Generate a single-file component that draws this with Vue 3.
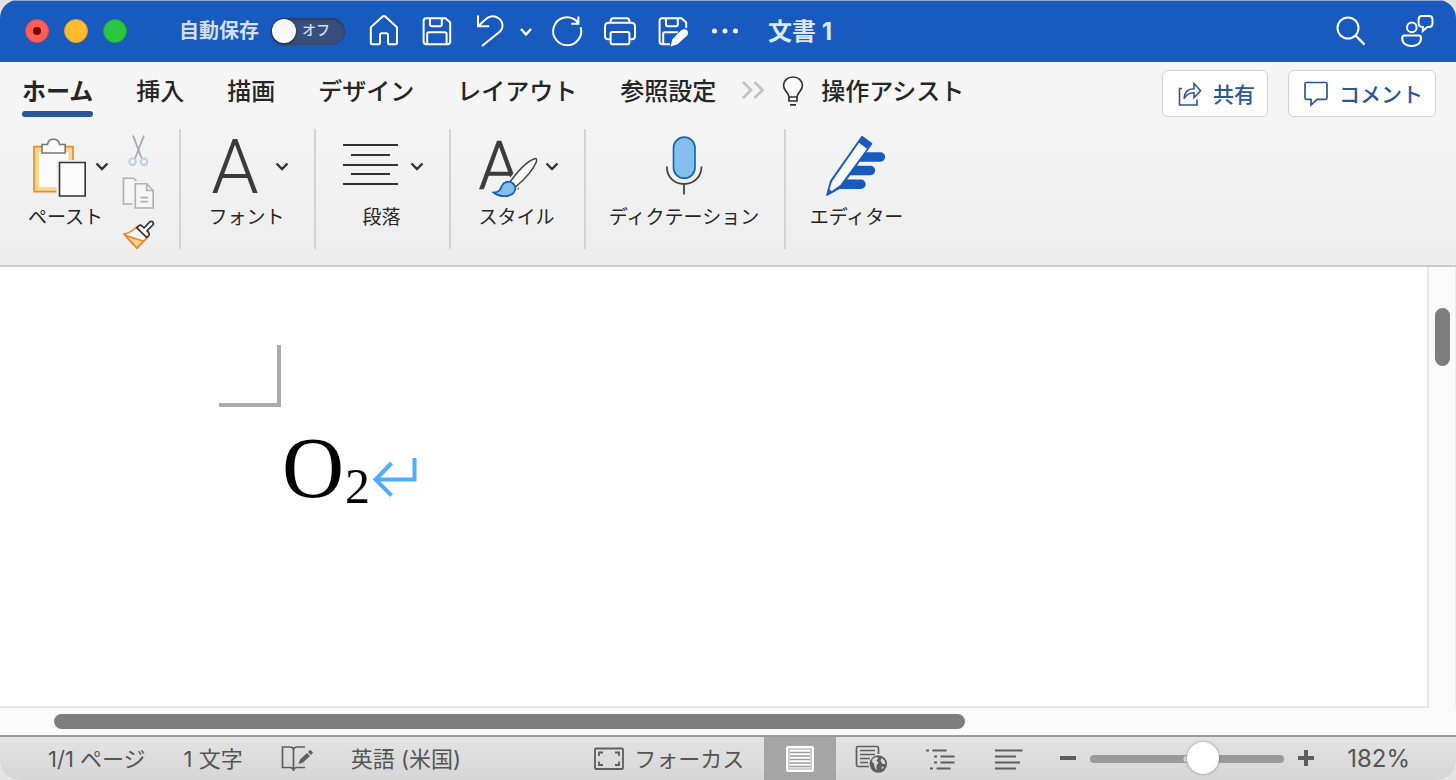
<script setup>
import { ref } from 'vue'

const autosave = ref(false)
const zoom = ref(60)
const activeTab = ref('ホーム')
const activeView = ref('print')

const tabs = ['ホーム', '挿入', '描画', 'デザイン', 'レイアウト', '参照設定']
const views = [
  { id: 'print', label: '印刷レイアウト' },
  { id: 'web', label: 'Web レイアウト' },
  { id: 'outline', label: 'アウトライン' },
  { id: 'draft', label: '下書き' },
]
</script>

<template>
  <div class="window">
    <header class="titlebar">
      <div class="lights">
        <button class="light red" aria-label="閉じる"></button>
        <button class="light yellow" aria-label="しまう"></button>
        <button class="light green" aria-label="拡大"></button>
      </div>
      <label class="autosave">
        <span class="autosave-text">自動保存</span>
        <span class="switch">
          <input v-model="autosave" type="checkbox" />
          <span class="knob"></span>
          <span class="switch-text">オフ</span>
        </span>
      </label>
      <div class="quick">
        <button aria-label="ホーム">
          <svg width="32" height="32" viewBox="0 0 32 32"><path d="M2.8 13.2 Q2.8 12.2 3.6 11.5 L14.6 1.6 Q16 .5 17.2 1.6 L28.2 11.5 Q29 12.2 29 13.2 V27.7 Q29 29.2 27.5 29.2 H21.5 Q20 29.2 20 27.7 V20 Q20 18.2 18.2 18.2 H13.8 Q12 18.2 12 20 V27.7 Q12 29.2 10.5 29.2 H4.3 Q2.8 29.2 2.8 27.7 Z" /></svg>
        </button>
        <button aria-label="保存">
          <svg width="32" height="32" viewBox="0 0 32 32"><path d="M5 3.3 H24.5 L29.2 7.5 V26.5 Q29.2 29.2 26.5 29.2 H5.2 Q2.6 29.2 2.6 26.5 V5.8 Q2.6 3.3 5 3.3 Z M9 3.5 V9.5 Q9 11.3 10.8 11.3 H19 Q20.8 11.3 20.8 9.5 V3.5 M6.2 29 V19 Q6.2 17.3 8 17.3 H23.8 Q25.6 17.3 25.6 19 V29" /></svg>
        </button>
        <button aria-label="元に戻す">
          <svg width="32" height="32" viewBox="0 0 32 32"><path d="M4 .5 V11.2 H15.2 M4.4 10.8 L12 4 C15.5 .6 20.5 .4 24.2 3 C29.6 6.6 29.8 13.4 25.4 17 L8 31" /></svg>
        </button>
        <button class="narrow" aria-label="元に戻す操作の一覧">
          <svg width="16" height="32" viewBox="0 0 16 32"><path d="M3 14 L8 19.5 L13 14" stroke-width="2.4" /></svg>
        </button>
        <button class="redo" aria-label="繰り返し">
          <svg width="32" height="32" viewBox="0 0 32 32"><path d="M29.6 12.2 A14 14 0 1 1 24 4.6 Q26.3 6.3 27.2 8.6 M27.4 1.6 V8.8 H20.2" /></svg>
        </button>
        <button aria-label="印刷">
          <svg width="32" height="32" viewBox="0 0 32 32"><path d="M6.6 24.2 H4 Q1 24.2 1 21.2 V11.5 Q1 7.8 4.7 7.8 H27.3 Q31 7.8 31 11.5 V21.2 Q31 24.2 28 24.2 H25.4 M6.6 7.8 V6 Q6.6 3.2 9.4 3.2 H22.6 Q25.4 3.2 25.4 6 V7.8 M8.6 17 H23.4 Q25.4 17 25.4 19 V27.2 Q25.4 29.2 23.4 29.2 H8.6 Q6.6 29.2 6.6 27.2 V19 Q6.6 17 8.6 17 Z" /></svg>
        </button>
        <button aria-label="名前を付けて保存">
          <svg width="32" height="32" viewBox="0 0 32 32"><path d="M13 29.2 H5.2 Q2.6 29.2 2.6 26.5 V5.8 Q2.6 3.3 5 3.3 H24.5 L29.2 7.5 V13 M9 3.5 V9.5 Q9 11.3 10.8 11.3 H19 Q20.8 11.3 20.8 9.5 V3.5 M6.2 29 V19 Q6.2 17.3 8 17.3 H21" /><path d="M23.4 15.9 Q26 13.4 29.2 14.6 Q32.3 17 30.2 20.6 L20.5 29.3 L13.6 31.6 L15.3 24.6 Z" fill="#fff" stroke="none" /></svg>
        </button>
        <button aria-label="その他">
          <svg width="32" height="32" viewBox="0 0 32 32"><g fill="#fff" stroke="none"><circle cx="4.5" cy="16" r="2.5" /><circle cx="15" cy="16" r="2.5" /><circle cx="25.5" cy="16" r="2.5" /></g></svg>
        </button>
      </div>
      <h1>文書 1</h1>
      <div class="title-right">
        <button aria-label="検索">
          <svg width="32" height="32" viewBox="0 0 32 32"><circle cx="13" cy="13" r="10.5" /><path d="M20.6 20.6 L29.6 29.6" stroke-width="2.2" /></svg>
        </button>
        <button aria-label="プレゼンス">
          <svg width="32" height="32" viewBox="0 0 32 32"><circle cx="10.8" cy="12.4" r="4.8" /><path d="M3.6 20.6 H17.6 Q20 20.6 20 23 C20 28.4 16 31 10.6 31 C5.2 31 1.2 28.4 1.2 23 Q1.2 20.6 3.6 20.6 Z M17.6 8 V4.4 Q17.6 1 21 1 H28 Q31.5 1 31.5 4.4 V8.6 Q31.5 12 28 12 H26.3 L21.8 16 V12 Q17.6 12 17.6 8 Z" /></svg>
        </button>
      </div>
    </header>

    <nav class="tabs">
      <div class="tab-list">
        <button v-for="tab in tabs" :key="tab" :class="{ active: tab === activeTab }" @click="activeTab = tab">{{ tab }}</button>
      </div>
      <button class="more" aria-label="その他のタブ">
        <svg width="24" height="20" viewBox="0 0 24 20" fill="none" stroke="#c3c3c3" stroke-width="2.8"><path d="M2 2 L10 10 L2 18 M13.5 2 L21.5 10 L13.5 18" /></svg>
      </button>
      <button class="assist">
        <svg width="24" height="30" viewBox="0 0 24 30" fill="none" stroke="#333" stroke-width="1.7"><path d="M8 21 C8 16.5 2.6 15 2.6 9.8 C2.6 4.6 6.8 1 12 1 C17.2 1 21.4 4.6 21.4 9.8 C21.4 15 16 16.5 16 21 V25 H8 Z" fill="#fff" /><path d="M8 21 H16 M9 28.8 H15" /></svg>
        <span>操作アシスト</span>
      </button>
      <div class="actions">
        <button>
          <svg width="24" height="26" viewBox="0 0 24 26" fill="none" stroke="#2b579a" stroke-width="1.6"><path d="M4 7.5 H1.5 V24 H19 V18.5 M6 17.5 C6.5 11.5 10 7.8 16 7.8 V2.5 L22.6 9.8 L16 16.5 V11.8 C11.5 11.8 8.5 13.5 6 17.5 Z" /></svg>
          <span>共有</span>
        </button>
        <button class="comment">
          <svg width="24" height="26" viewBox="0 0 24 26" fill="none" stroke="#2b579a" stroke-width="1.7"><path d="M2.5 1.5 H21.5 Q23 1.5 23 3 V16.8 Q23 18.3 21.5 18.3 H13 L7 24 V18.3 H2.5 Q1 18.3 1 16.8 V3 Q1 1.5 2.5 1.5 Z" /></svg>
          <span>コメント</span>
        </button>
      </div>
    </nav>

    <section class="ribbon">
      <div class="group paste-group">
        <button class="tool">
          <span class="tool-row">
            <svg width="60" height="64" viewBox="0 0 60 64">
              <path d="M4 11.7 H43 V56.7 H4 Z" fill="#fbd78c" stroke="#ed8733" stroke-width="1.7" />
              <path d="M9 17 H38.5 V52 H9 Z" fill="#fafafa" />
              <path d="M26.5 25 H60 V64 H26.5 Z" fill="#f1f1f1" />
              <path d="M12 9.5 H17.5 C18 6 20.5 4.3 23.5 4.3 C26.5 4.3 29 6 29.5 9.5 H35.2 V18 H12 Z" fill="#fafafa" stroke="#777" stroke-width="1.6" />
              <path d="M29.5 27.5 H55.2 V61 H29.5 Z" fill="#fafafa" stroke="#333" stroke-width="1.6" />
            </svg>
            <svg class="chevron" width="14" height="14" viewBox="0 0 14 14"><path d="M1.5 3.5 L7 9 L12.5 3.5" /></svg>
          </span>
          <span class="tool-label">ペースト</span>
        </button>
        <div class="clip-tools">
          <button aria-label="切り取り">
            <svg width="32" height="32" viewBox="0 0 32 32" fill="none" stroke-width="1.8"><path d="M11 .5 L19.8 23.5 M22 .5 L13 23.5" stroke="#aaa" /><circle cx="10.6" cy="26.7" r="3.3" stroke="#b0d0ec" /><circle cx="22" cy="26.7" r="3.3" stroke="#b0d0ec" /></svg>
          </button>
          <button aria-label="コピー">
            <svg width="32" height="32" viewBox="0 0 32 32" fill="#f6f6f6" stroke="#b0b0b0" stroke-width="1.6"><path d="M10.5 27 H1.5 V1.2 H11.5 L14.5 4" /><path d="M13.3 6.7 H24.7 L31.2 13.5 V31 H13.3 Z M24.7 6.7 V13.5 H31.2 M18.5 20.6 H26 M18.5 24.6 H26" /></svg>
          </button>
          <button aria-label="書式のコピー">
            <svg width="32" height="32" viewBox="0 0 32 32" stroke-width="1.7" stroke-linejoin="round"><path d="M1.8 15.2 Q9 13.5 14.5 8 L25 19 Q21.5 22 15 29.2 Q8.5 22.5 1.8 15.2 Z" fill="#fafafa" stroke="#ed8733" /><path d="M2.5 15.5 Q10 19 21.5 22 L15 29 Z" fill="#fbd78c" stroke="#ed8733" /><path d="M14.8 8.8 L17 6.6 Q18.5 5.5 20 7 L22 9 L28 2.7 Q29.5 1.7 30.8 3 Q32 4.5 30.8 6 L25 11.9 L26.8 13.7 Q28 15.2 26.8 16.6 L24.9 18.5 Z" fill="#fafafa" stroke="#333" /></svg>
          </button>
        </div>
      </div>

      <div class="group">
        <button class="tool">
          <span class="tool-row">
            <svg width="60" height="64" viewBox="0 0 60 64" aria-hidden="true"><text class="letter" x="30" y="58" font-size="76" text-anchor="middle">A</text></svg>
            <svg class="chevron" width="14" height="14" viewBox="0 0 14 14"><path d="M1.5 3.5 L7 9 L12.5 3.5" /></svg>
          </span>
          <span class="tool-label">フォント</span>
        </button>
      </div>

      <div class="group">
        <button class="tool">
          <span class="tool-row">
            <svg width="60" height="64" viewBox="0 0 60 64" stroke="#333" stroke-width="2"><path d="M3 10 H58 M11 20 H50 M3 30 H58 M11 39 H50 M3 49 H58" /></svg>
            <svg class="chevron" width="14" height="14" viewBox="0 0 14 14"><path d="M1.5 3.5 L7 9 L12.5 3.5" /></svg>
          </span>
          <span class="tool-label">段落</span>
        </button>
      </div>

      <div class="group">
        <button class="tool">
          <span class="tool-row">
            <svg width="60" height="64" viewBox="0 0 60 64">
              <text class="letter style-letter" x="24" y="54" font-size="66" text-anchor="middle">A</text>
              <path d="M35 47 C43 36 52 26.5 59 24 Q62.5 22.5 61.3 27 C58.5 34 50 44 40.5 52 Z" fill="#f0f0f0" stroke="#f0f0f0" stroke-width="5" />
              <path d="M35 47 C43 36 52 26.5 59 24 Q62.5 22.5 61.3 27 C58.5 34 50 44 40.5 52 Z" fill="#fafafa" stroke="#444" stroke-width="1.5" />
              <path d="M18.5 57.5 C24.5 57.5 25.5 54 26.8 51 C29 46.5 34 45.5 37.5 48 C41.5 51 41 55.5 38 58.5 C33 62.5 24 62 18.5 57.5 Z" fill="#83beec" stroke="#185abd" stroke-width="1.7" />
            </svg>
            <svg class="chevron" width="14" height="14" viewBox="0 0 14 14"><path d="M1.5 3.5 L7 9 L12.5 3.5" /></svg>
          </span>
          <span class="tool-label">スタイル</span>
        </button>
      </div>

      <div class="group wide">
        <button class="tool">
          <span class="tool-row">
            <svg width="60" height="64" viewBox="0 0 60 64" fill="none"><rect x="19.5" y="2.2" width="21.5" height="41" rx="10.7" fill="#83beec" stroke="#1a66b8" stroke-width="1.7" /><path d="M12.8 31.5 C12.8 42 20 49 30 49 C40 49 47.5 42 47.5 31.5 M30 49 V59.5" stroke="#444" stroke-width="1.8" /></svg>
          </span>
          <span class="tool-label">ディクテーション</span>
        </button>
      </div>

      <div class="group last">
        <button class="tool">
          <span class="tool-row">
            <svg width="60" height="64" viewBox="0 0 60 64"><path d="M30 22 H54.5 M20 35.5 H44.5 M15 49.3 H35" stroke="#185abd" stroke-width="9.4" stroke-linecap="round" /><path d="M1 60 L4.8 46 L36 1.700 L45.5 8.7 L14.5 52.5 Z" fill="#185abd" stroke="#185abd" stroke-width="1.6" stroke-linejoin="round" /><path d="M33 7.8 L41 13.8 L14.3 50 L5.5 56.2 L3.5 54 L6 46.5 Z" fill="#fafafa" /></svg>
          </span>
          <span class="tool-label">エディター</span>
        </button>
      </div>
    </section>

    <main class="document">
      <div class="page-row">
        <article class="page">
          <div class="margin-mark"></div>
          <p class="line">O<sub>2</sub><svg class="return" width="44" height="40" viewBox="0 0 44 40" fill="none" stroke="#52adff" stroke-width="4"><path d="M41.5 0 V21.5 H3 M18.5 5 L2.5 21.5 L18.5 37.5" /></svg></p>
        </article>
        <div class="scroll-y"><div class="thumb"></div></div>
      </div>
      <div class="scroll-x"><div class="thumb"></div></div>
    </main>

    <footer class="status">
      <div class="status-left">
        <span>1/1 ページ</span>
        <span>1 文字</span>
        <button class="proof" aria-label="文章校正">
          <svg width="32" height="28" viewBox="0 0 32 28" fill="none" stroke="#5e5e5e" stroke-width="1.7"><path d="M12.5 25 Q11.5 22.5 9 22.5 H1.5 V2 H9 Q12.5 2 12.5 5.5 V26 M12.5 5.5 Q12.5 2 16 2 H24 M12.5 25 Q13.5 22.5 16 22.5 H24" /><path d="M17.5 19 L19 14.5 L26 8 L29 11 L22 17.5 Z M27 7 L29.3 4.8 L32 7.5 L30 10 Z" fill="#5e5e5e" stroke="none" /></svg>
        </button>
        <span>英語 (米国)</span>
      </div>
      <button class="focus">
        <svg width="30" height="24" viewBox="0 0 30 24" fill="none" stroke="#5e5e5e" stroke-width="1.8"><rect x="1" y="1.5" width="28" height="20.5" rx="1" /><path d="M5 9 V5.5 H9 M21 5.5 H25 V9 M25 14.5 V18 H21 M9 18 H5 V14.5" /></svg>
        <span>フォーカス</span>
      </button>
      <div class="views">
        <button v-for="view in views" :key="view.id" :aria-label="view.label" :class="{ active: view.id === activeView }" @click="activeView = view.id">
          <svg v-if="view.id === 'print'" width="32" height="28" viewBox="0 0 32 28" fill="none"><rect x="2" y="1" width="28" height="26" rx="2" fill="#fff" /><path d="M4.5 3.5 H27.5 V24.500 H4.5 Z" fill="#a0a0a0" /><path d="M5.5 4.5 H26.5 V23.5 H5.5 Z" fill="#fff" /><path d="M6 7.5 H26 M6 11 H26 M6 14.5 H26 M6 18 H26 M6 21.500 H26" stroke="#9a9a9a" stroke-width="1.4" /></svg>
          <svg v-else-if="view.id === 'web'" width="32" height="28" viewBox="0 0 32 28" fill="none" stroke="#5e5e5e" stroke-width="1.7"><path d="M14 21.5 H3 Q1.5 21.5 1.5 20 V3 Q1.5 1.5 3 1.5 H22 Q23.5 1.5 23.5 3 V9 M5 5.5 H20 M5 9.5 H20 M5 13.5 H15 M5 17.5 H13" /><circle cx="23.3" cy="19" r="8.7" fill="#5e5e5e" stroke="none" /><path d="M17.5 14 L21 12 L23.5 13 L21.5 15.5 L23.5 18 L21.5 20.5 L21.5 25.5 L19.5 22 L19 18.5 L17 17 Z M26.5 13 L29.5 15.5 L30.5 19 L27.5 19 L25.5 16 Z M26.5 21.5 L29 22 L27 24.5 Z" fill="#d8d8d8" stroke="none" /></svg>
          <svg v-else-if="view.id === 'outline'" width="32" height="28" viewBox="0 0 32 28" fill="none" stroke="#5e5e5e" stroke-width="1.8"><path d="M2 5.5 H5 M8.5 5.5 H22.5 M10 11.5 H13 M16.5 11.5 H30.5 M10 17.5 H13 M16.5 17.5 H30.5 M6 23.5 H9 M12.5 23.5 H26.5" /></svg>
          <svg v-else width="32" height="28" viewBox="0 0 32 28" fill="none" stroke="#5e5e5e" stroke-width="1.8"><path d="M2 5.5 H29.5 M2 11.5 H23 M2 17.5 H27 M2 23.5 H23" /></svg>
        </button>
      </div>
      <div class="zoom">
        <button aria-label="縮小"><svg width="16" height="16" viewBox="0 0 16 16" stroke="#5e5e5e" stroke-width="4"><path d="M0 7 H16" /></svg></button>
        <input v-model="zoom" type="range" min="0" max="100" aria-label="ズーム" />
        <button aria-label="拡大"><svg width="16" height="16" viewBox="0 0 16 16" stroke="#5e5e5e" stroke-width="4"><path d="M0 7 H16 M8 -1 V15" /></svg></button>
        <span class="percent">182%</span>
      </div>
    </footer>
  </div>
</template>

<style>
body {
  background: #e4e4e4;
}
</style>

<style scoped>
* {
  box-sizing: border-box;
}
.window {
  display: flex;
  flex-direction: column;
  min-height: 100vh;
  overflow: hidden;
  border-radius: 18px;
  background: #fafafa;
  color: #262626;
  font-family: Inter, "Noto Sans CJK JP", sans-serif;
}
button {
  display: flex;
  align-items: center;
  padding: 0;
  border: 0;
  background: none;
  color: inherit;
  font: inherit;
  white-space: nowrap;
}
svg {
  display: block;
  flex: none;
  overflow: visible;
}

.titlebar {
  display: flex;
  align-items: center;
  height: 62px;
  padding: 0 23px 1px 25px;
  border-top: 1px solid #8cacde;
  background: #185abd;
}
.lights {
  display: flex;
  gap: 15px;
}
.light {
  justify-content: center;
  width: 24px;
  height: 24px;
  border-radius: 50%;
}
.red {
  border: 1px solid #d94a4a;
  background: #ff5f57;
}
.red::after {
  content: "";
  width: 8px;
  height: 8px;
  border-radius: 50%;
  background: #7a0000;
}
.yellow {
  border: 1px solid #d9a036;
  background: #febc2e;
}
.green {
  border: 1px solid #1fa344;
  background: #28c840;
}
.autosave {
  display: flex;
  align-items: center;
  gap: 12px;
  margin-left: 52px;
  color: #d3def2;
}
.autosave-text {
  font-size: 20px;
  font-weight: 700;
  line-height: 28px;
}
.switch {
  display: flex;
  align-items: center;
  width: 74px;
  height: 27px;
  padding: 0 1px;
  border-radius: 14px;
  background: #374f7a;
  box-shadow: inset 0 1px 3px #1f335a;
}
.switch input {
  appearance: none;
  width: 0;
  height: 0;
  margin: 0;
}
.knob {
  width: 24px;
  height: 24px;
  border-radius: 50%;
  background: linear-gradient(#f3f3f3, #fff);
  box-shadow: 0 1px 3px #0008;
}
.switch-text {
  margin-left: 6px;
  padding-bottom: 2px;
  font-size: 14px;
  font-weight: 500;
  line-height: 20px;
}
.quick,
.title-right {
  display: flex;
  gap: 21px;
  fill: none;
  stroke: #fff;
  stroke-width: 2;
}
.quick {
  margin-left: 23px;
}
.quick .narrow {
  margin-left: -9px;
}
.quick .redo {
  margin-left: -4px;
}
h1 {
  margin: 0 0 0 26px;
  padding-top: 2px;
  color: #dce6f6;
  font-size: 24px;
  font-weight: 700;
  line-height: 32px;
}
.title-right {
  gap: 34px;
  margin-left: auto;
}

.tabs {
  display: flex;
  align-items: flex-start;
  height: 62px;
  padding: 8px 20px 0 22px;
  background: #f5f5f5;
  font-size: 24px;
  font-weight: 500;
}
.tab-list {
  display: flex;
  gap: 43px;
}
.tab-list button {
  height: 47px;
  padding-top: 2px;
  border-bottom: 6px solid transparent;
  line-height: 36px;
}
.tab-list .active {
  position: relative;
  font-weight: 700;
}
.tab-list .active::after {
  content: "";
  position: absolute;
  bottom: -6px;
  left: 0;
  width: 100%;
  height: 6px;
  border-radius: 3px;
  background: #2b579a;
}
.more {
  height: 40px;
  margin-left: 25px;
}
.assist {
  gap: 16px;
  height: 42px;
  margin-left: 16px;
  line-height: 36px;
}
.assist span {
  padding-top: 2px;
}
.actions {
  display: flex;
  gap: 20px;
  margin-left: auto;
  color: #2b579a;
  font-size: 21px;
}
.actions button {
  gap: 11px;
  height: 47px;
  padding: 0 12px 0 15px;
  border: 1px solid #d2d2d2;
  border-radius: 6px;
  background: #fff;
  line-height: 30px;
}
.actions span {
  padding-top: 3px;
}

.ribbon {
  display: flex;
  height: 143px;
  padding: 5px 0 16px;
  border-bottom: 2px solid #cbcbcb;
  background: linear-gradient(#f4f4f4, #ededed);
}
.group {
  display: flex;
  justify-content: center;
  width: 135px;
  padding: 6px 2px 0 0;
  border-right: 2px solid #d3d3d3;
}
.paste-group {
  justify-content: flex-start;
  gap: 14px;
  width: 181px;
  padding-left: 28px;
}
.wide {
  width: 200px;
}
.last {
  width: 143px;
  border-right: 0;
}
.tool {
  flex-direction: column;
  align-self: flex-start;
  gap: 7px;
}
.tool-row {
  display: flex;
  align-items: center;
  gap: 10px;
  height: 64px;
}
.paste-group .tool {
  width: 80px;
  align-items: flex-start;
}
.paste-group .tool-row {
  gap: 5px;
  margin-left: 2px;
}
.chevron {
  fill: none;
  stroke: #333;
  stroke-width: 2.4;
}
.tool-label {
  font-size: 19px;
  line-height: 24px;
}
.letter {
  fill: #3b3b3b;
  font-family: Roboto, sans-serif;
  font-weight: 300;
}
.style-letter {
  stroke: #3b3b3b;
  stroke-width: 0.6;
}
.clip-tools {
  display: flex;
  flex-direction: column;
  gap: 10px;
}

.document {
  display: flex;
  flex: 1;
  flex-direction: column;
}
.page-row {
  display: flex;
  flex: 1;
}
.page {
  flex: 1;
  padding: 78px 0 0 219px;
  border-right: 2px solid #e8e8e8;
  border-bottom: 2px solid #e8e8e8;
  background: #fff;
}
.margin-mark {
  width: 62px;
  height: 62px;
  border-right: 4px solid #ababab;
  border-bottom: 4px solid #ababab;
}
.line {
  margin: 13px 0 0 63px;
  color: #000;
  font-family: "Liberation Serif", "Noto Sans CJK JP", serif;
  font-size: 86px;
  line-height: 96px;
}
.line sub {
  margin-left: 1px;
  font-size: 50px;
  line-height: 0;
  vertical-align: -6px;
}
.return {
  display: inline-block;
  margin-left: 3px;
  vertical-align: -1px;
}
.scroll-y {
  width: 27px;
  padding: 41px 5px 0 6px;
  border-right: 1px solid #eee;
}
.thumb {
  border-radius: 8px;
  background: #7e7e7e;
}
.scroll-y .thumb {
  height: 58px;
}
.scroll-x {
  height: 27px;
  padding: 6px 0 0 54px;
}
.scroll-x .thumb {
  width: 65%;
  height: 15px;
}

.status {
  display: flex;
  align-items: center;
  height: 45px;
  padding-right: 46px;
  border-top: 2px solid #999;
  border-radius: 0 0 18px 18px;
  background: linear-gradient(#e3e3e3, #d6d6d6);
  color: #555;
  font-size: 22px;
  line-height: 30px;
  white-space: nowrap;
}
.status-left {
  display: flex;
  gap: 38px;
  padding-left: 48px;
}
.focus {
  gap: 10px;
  margin-left: auto;
}
.views {
  display: flex;
  align-self: stretch;
  margin-left: 20px;
}
.views button {
  justify-content: center;
  width: 69px;
}
.views button:first-child {
  width: 72px;
}
.views .active {
  background: #a5a5a5;
}
.zoom {
  display: flex;
  align-items: center;
  gap: 14px;
  margin-left: 17px;
}
.zoom input {
  appearance: none;
  width: 194px;
  height: 32px;
  margin: 0;
  background: none;
}
.zoom input::-webkit-slider-runnable-track {
  height: 8px;
  border-radius: 4px;
  background: radial-gradient(circle at center, #d8d8d8 3px, transparent 4px), #9a9a9a;
}
.zoom input::-webkit-slider-thumb {
  appearance: none;
  width: 32px;
  height: 32px;
  margin-top: -13px;
  border-radius: 50%;
  background: #fff;
  box-shadow: 0 0 3px #0006;
}
.percent {
  margin-left: 19px;
  font-size: 24px;
}
</style>
